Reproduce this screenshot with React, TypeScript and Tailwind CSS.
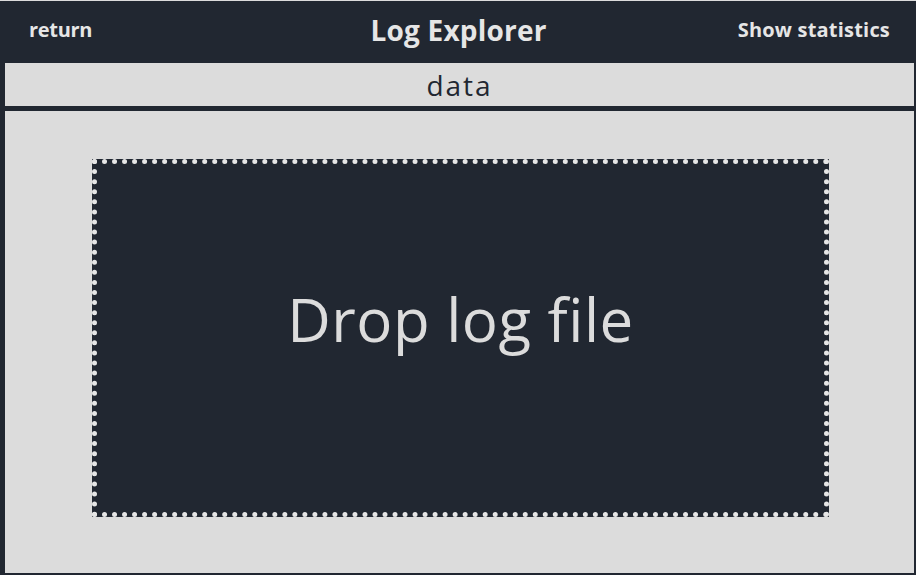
import React from 'react';

const font = { fontFamily: '"Open Sans", "Noto Sans", sans-serif' };

const App: React.FC = () => {
  return (
    <div
      className="w-[916px] h-[575px] bg-[#212731] border-t border-[#dcdcdc] flex flex-col overflow-hidden"
      style={font}
    >
      <header className="h-[62px] grid grid-cols-[1fr_auto_1fr] items-center px-[26px] pb-[5px] text-[#e6e6e6]">
        <button className="justify-self-start pl-[3px] text-[20px] font-bold tracking-[-0.3px]">return</button>
        <h1 className="ml-[1px] text-[28px] font-bold tracking-[0.2px]">Log Explorer</h1>
        <button className="justify-self-end text-[20px] font-bold tracking-[0.2px]">Show statistics</button>
      </header>
      <div className="flex-1 flex flex-col pl-[5px] pr-[2px] pb-[2px] gap-[5px]">
        <div className="h-[43px] bg-[#dcdcdc] flex items-center justify-center text-[28px] tracking-[2px] text-[#212731]">
          data
        </div>
        <main className="flex-1 bg-[#dcdcdc] pt-[48px] pb-[56px] pl-[87px] pr-[85px]">
          <div className="h-full bg-[#212731] border-[5px] border-dotted border-[#e6e6e6] flex items-center justify-center">
            <span className="mb-[38px] text-[60px] text-[#dcdcdc] tracking-[0.5px]">Drop log file</span>
          </div>
        </main>
      </div>
    </div>
  );
};

export default App;
